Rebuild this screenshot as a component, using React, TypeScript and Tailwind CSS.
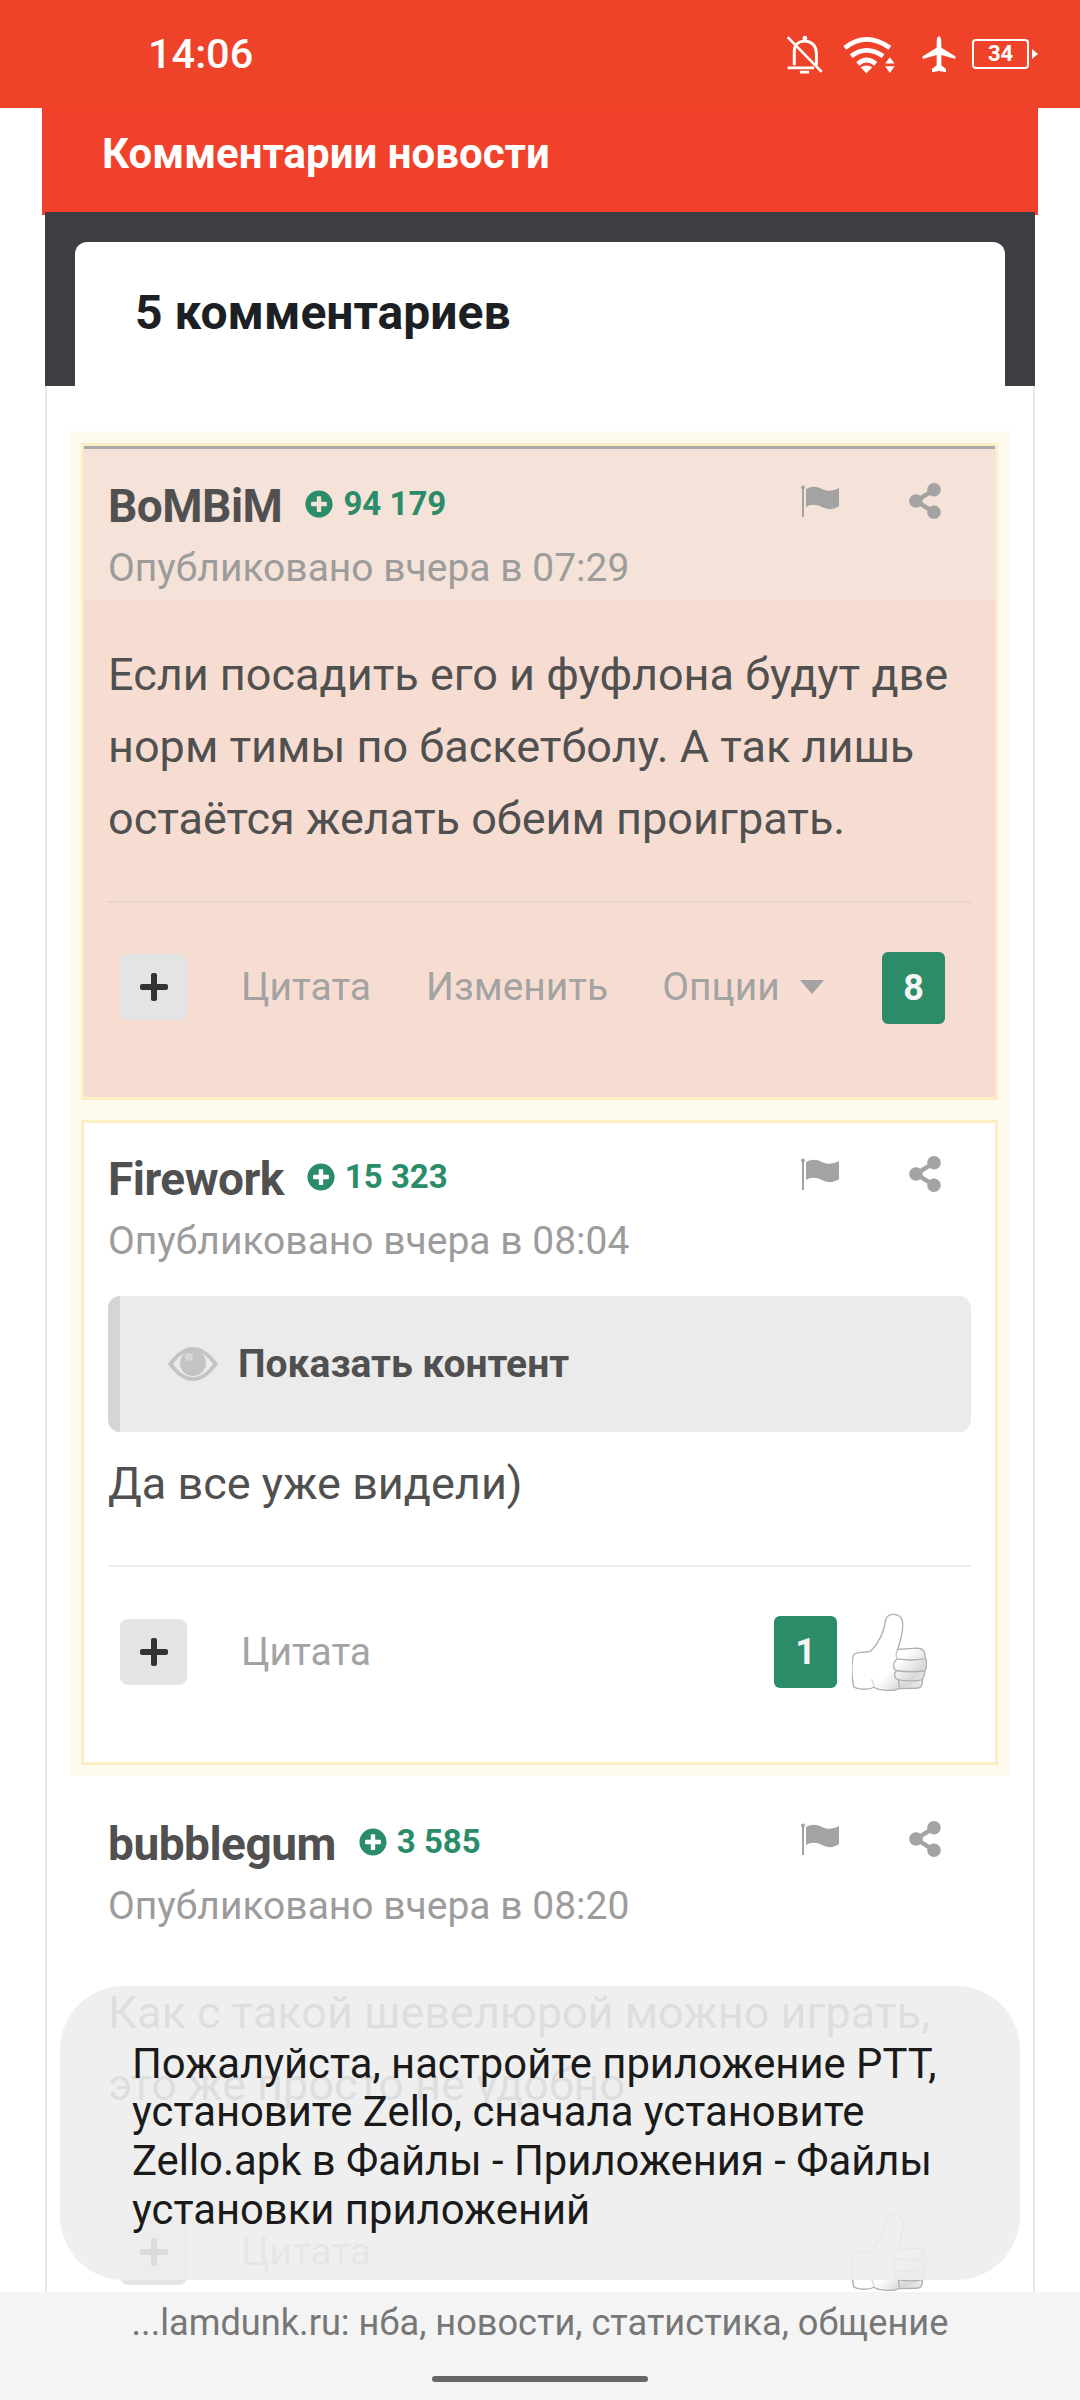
import React from "react";
import { FaPlus, FaShareAlt, FaPlusCircle } from "react-icons/fa";

const Flag = () => (
  <svg width="38" height="32" viewBox="0 0 38 32" className="block">
    <rect x="1" y="2" width="2" height="30" fill="#a3a3a3" />
    <circle cx="2" cy="2.5" r="2" fill="#a3a3a3" />
    <path d="M5 4C11 1 15 1 21 4C27 7 32 6 38 3V21C32 25 27 25 21 22C15 19 10 19 5 22Z" fill="#a3a3a3" />
  </svg>
);

const Thumb = ({ id }: { id: string }) => (
  <svg width="75" height="79" viewBox="280 72 222 234" className="block">
    <defs>
      <linearGradient id={id} x1="0" y1="0" x2="1" y2="1">
        <stop offset="0.62" stopColor="#ffffff" />
        <stop offset="0.82" stopColor="#d8d8d8" />
        <stop offset="1" stopColor="#f4f4f4" />
      </linearGradient>
    </defs>
    <path
      d="M380 90C385 72 425 68 430 100C432 130 422 160 415 180L470 176C490 176 497 185 496 200C503 215 503 235 495 245C497 255 490 265 488 270C490 285 485 295 470 295L420 296C400 305 360 302 345 292C330 300 295 300 285 290C278 260 278 215 285 195C295 185 325 190 335 185C355 165 375 130 380 90Z"
      fill={`url(#${id})`}
      stroke="#b0b0b0"
      strokeWidth="4"
    />
    <path d="M415 208C400 215 400 240 412 243C403 250 403 265 418 270C418 280 418 290 422 295" fill="none" stroke="#b0b0b0" strokeWidth="4" />
    <path d="M415 208C440 212 470 212 494 208M412 243C440 247 470 247 494 243M418 270C440 274 465 274 488 270" fill="none" stroke="#b0b0b0" strokeWidth="4" />
    <path d="M415 180C410 190 408 200 415 208" fill="none" stroke="#c0c0c0" strokeWidth="4" />
    <path d="M345 292C345 280 340 275 338 268" fill="none" stroke="#cccccc" strokeWidth="3" />
  </svg>
);

const Eye = () => (
  <svg width="50" height="34" viewBox="0 0 50 34" className="block">
    <path d="M0 17C8 6 16 0 25 0C34 0 42 6 50 17C42 28 34 34 25 34C16 34 8 28 0 17Z" fill="#c4c4c4" />
    <path d="M5 17C11 9 17 4 25 4C33 4 39 9 45 17C39 25 33 30 25 30C17 30 11 25 5 17Z" fill="#ebebeb" />
    <circle cx="25" cy="16" r="13" fill="#c4c4c4" />
    <circle cx="21" cy="10" r="4" fill="#d8d8d8" />
  </svg>
);

function Head({ name, rep, date }: { name: string; rep: string; date: string }) {
  return (
    <>
      <div className="flex h-[50px] items-center">
        <span className="mr-[23px] text-[46px] font-bold leading-[50px] tracking-[-0.5px] text-[#505050]">{name}</span>
        <FaPlusCircle className="mb-[4px] h-[28px] w-[28px] text-[#2a8c68]" />
        <span className="mb-[4px] ml-[10px] text-[33px] font-bold leading-[40px] text-[#2a8c68]">{rep}</span>
        <div className="mb-[10px] ml-auto mr-[29px] flex items-center gap-[69px]">
          <Flag />
          <FaShareAlt className="h-[36px] w-[34px] text-[#a3a3a3]" />
        </div>
      </div>
      <div className="mt-[12px] h-[50px] text-[39px] leading-[50px] text-[#9c9c9c]">{date}</div>
    </>
  );
}

function Plus() {
  return (
    <div className="ml-[12px] flex h-[66px] w-[67px] items-center justify-center rounded-[8px] bg-[#e4e4e4]">
      <FaPlus className="h-[32px] w-[32px] text-[#333333]" />
    </div>
  );
}

const Badge = ({ n }: { n: string }) => (
  <div className="flex h-[72px] w-[63px] items-center justify-center rounded-[6px] bg-[#2c8c68] text-[36px] font-bold text-[#f5f5f5]">
    {n}
  </div>
);

const Quote = ({ children }: { children: React.ReactNode }) => (
  <span className="text-[39px] leading-[50px] text-[#a3a3a3]">{children}</span>
);

export default function App() {
  return (
    <div
      className="relative h-[2400px] w-[1080px] overflow-hidden bg-white"
      style={{ fontFamily: "Roboto, 'Noto Sans', sans-serif" }}
    >
      {/* status bar */}
      <div className="flex h-[108px] items-center bg-[#ee4229] pl-[148px] pr-[42px] text-white">
        <span className="text-[41.5px] font-medium">14:06</span>
        <div className="ml-auto flex items-center">
          <svg width="38" height="39" viewBox="80 70 115 115" className="block">
            <path d="M105 160V120C105 97 120 87 137 87C155 87 172 99 172 125V160" fill="none" stroke="#fff" strokeWidth="9" />
            <path d="M85 168H165M122 181H150" fill="none" stroke="#fff" strokeWidth="8" />
            <path d="M85 75L188 180" stroke="#fff" strokeWidth="8" />
            <circle cx="137" cy="78" r="7" fill="#fff" />
          </svg>
          <svg width="54" height="39" viewBox="250 72 160 116" className="ml-[18px] block">
            <path d="M258 110Q322 60 392 110" fill="none" stroke="#fff" strokeWidth="14" />
            <path d="M277 135Q322 100 372 135" fill="none" stroke="#fff" strokeWidth="14" />
            <path d="M297 158Q322 135 350 158" fill="none" stroke="#fff" strokeWidth="14" />
            <path d="M305 168Q322 158 340 168L322 186Z" fill="#fff" />
            <path d="M392 138L406 157H378ZM378 165H406L392 185Z" fill="#fff" />
          </svg>
          <svg width="34" height="37" viewBox="490 77 102 111" className="ml-[26px] block">
            <path d="M541 78C535 78 534 90 534 100V112L492 138V146L534 134V165L520 176V186L541 182L562 186V176L548 165V134L590 146V138L548 112V100C548 90 547 78 541 78Z" fill="#fff" />
          </svg>
          <div className="ml-[16px] flex items-center">
            <div className="flex h-[30px] w-[57px] items-center justify-center rounded-[4px] border-[2.5px] border-white text-[22px] font-bold leading-none">
              34
            </div>
            <svg width="6" height="10" viewBox="0 0 6 10" className="ml-[3px] block">
              <path d="M0 0L6 5L0 10Z" fill="#fff" />
            </svg>
          </div>
        </div>
      </div>

      {/* header */}
      <div className="mx-[42px] flex h-[107px] items-start bg-[#f1412a] pl-[60px] pt-[22px]">
        <span className="text-[42px] font-bold leading-[48px] text-white">Комментарии новости</span>
      </div>

      {/* dark band with title card */}
      <div className="relative mx-[45px] -mt-[3px] h-[174px] bg-[#3c3e42] px-[30px] pt-[30px]">
        <div className="h-[144px] rounded-t-[12px] bg-white pl-[60px] pt-[44px]">
          <span className="block text-[48px] font-bold leading-[54px] text-[#1c1f23]">5 комментариев</span>
        </div>
      </div>

      {/* comments */}
      <div className="mx-[45px] h-[2000px] border-x-2 border-[#e9e9e9] pt-[45px]">
        {/* comment 1 */}
        <div className="ml-[22px] mr-[23px] bg-[#fefaee] px-[12px] pb-[11px] pt-[12px]">
          <div className="border-[3px] border-[#fbeec4] bg-[#f7ddd1]">
            <div className="border-t-[3px] border-[#aaaaaa] bg-[#f5e2d8] px-[24px] pt-[32px]">
              <Head name="BoMBiM" rep="94 179" date="Опубликовано вчера в 07:29" />
              <div className="h-[7px]" />
            </div>
            <div className="px-[24px] pb-[74px]">
              <div className="pt-[39px] text-[45px] leading-[72px] text-[#505050]">
                Если посадить его и фуфлона будут две
                <br />
                норм тимы по баскетболу. А так лишь
                <br />
                остаётся желать обеим проиграть.
              </div>
              <div className="mt-[46px] h-[2px] bg-[#e8d5ca]" />
              <div className="mt-[48px] flex h-[72px] items-center">
                <Plus />
                <span className="ml-[54px]"><Quote>Цитата</Quote></span>
                <span className="ml-[55px]"><Quote>Изменить</Quote></span>
                <span className="ml-[54px]"><Quote>Опции</Quote></span>
                <svg width="24" height="14" viewBox="0 0 24 14" className="ml-[20px] block">
                  <path d="M0 0H24L12 14Z" fill="#a3a3a3" />
                </svg>
                <div className="ml-auto mr-[26px] mt-[2px]"><Badge n="8" /></div>
              </div>
            </div>
          </div>
          {/* comment 2 */}
          <div className="mt-[20px] border-[3px] border-[#fbeec4] bg-white px-[24px] pb-[74px] pt-[31px]">
            <Head name="Firework" rep="15 323" date="Опубликовано вчера в 08:04" />
            <div className="mt-[30px] flex h-[136px] items-center rounded-[12px] border-l-[12px] border-[#d2d6d9] bg-[#ebebeb] pl-[48px]">
              <Eye />
              <span className="ml-[20px] text-[39px] font-bold text-[#505050]">Показать контент</span>
            </div>
            <div className="mt-[16px] text-[45px] leading-[72px] text-[#505050]">Да все уже видели)</div>
            <div className="mt-[45px] h-[2px] bg-[#eeeeee]" />
            <div className="mt-[49px] flex h-[72px] items-center">
              <Plus />
              <span className="ml-[54px]"><Quote>Цитата</Quote></span>
              <div className="ml-auto mr-[44px] flex items-center gap-[15px]">
                <Badge n="1" />
                <Thumb id="hand-a" />
              </div>
            </div>
          </div>
        </div>

        {/* comment 3 */}
        <div className="ml-[22px] mr-[23px] px-[39px] pt-[43px]">
          <Head name="bubblegum" rep="3 585" date="Опубликовано вчера в 08:20" />
          <div className="mt-[46px] text-[45px] leading-[72px] text-[#505050]">
            Как с такой шевелюрой можно играть,
            <br />
            это же просто не удобно
          </div>
          <div className="mt-[44px] h-[2px] bg-[#eeeeee]" />
          <div className="mt-[49px] flex h-[72px] items-center">
            <Plus />
            <span className="ml-[54px]"><Quote>Цитата</Quote></span>
            <div className="ml-auto mr-[44px]">
              <Thumb id="hand-b" />
            </div>
          </div>
        </div>
      </div>

      {/* toast */}
      <div className="absolute left-[60px] top-[1986px] flex h-[294px] w-[960px] items-center rounded-[64px] bg-[#ededed]/90 pl-[72px] pr-[40px] pt-[8px]">
        <p className="text-[41.8px] leading-[48.7px] text-[#1a1a1a]">
          Пожалуйста, настройте приложение РТТ,
          <br />
          установите Zello, сначала установите
          <br />
          Zello.apk в Файлы - Приложения - Файлы
          <br />
          установки приложений
        </p>
      </div>

      {/* bottom bar */}
      <div className="absolute bottom-0 left-0 flex h-[108px] w-[1080px] flex-col items-center bg-[#f4f4f4]">
        <div className="mt-[11px] text-[36.2px] leading-[40px] text-[#777777]">...lamdunk.ru: нба, новости, статистика, общение</div>
        <div className="mt-[33px] h-[6px] w-[216px] rounded-full bg-[#666666]" />
      </div>
    </div>
  );
}
